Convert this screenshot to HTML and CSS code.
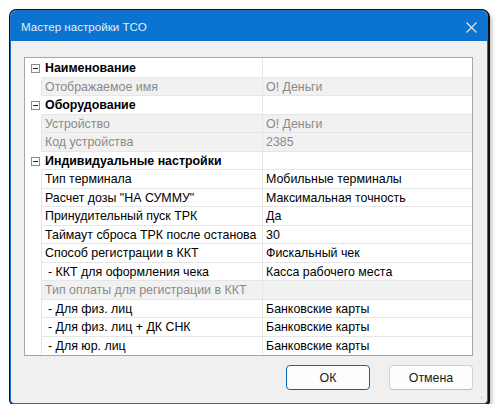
FILE: index.html
```html
<!DOCTYPE html>
<html lang="ru">
<head>
    <meta charset="UTF-8">
    <title>Мастер настройки ТСО</title>
    <link rel="stylesheet" href="styles.css">
</head>
<body>
    <div class="window">
        <div class="titlebar">
            <span class="title">Мастер настройки ТСО</span>
            <svg class="close" width="11" height="11" viewBox="0 0 11 11">
                <path d="M0.5 0.5 L10.5 10.5 M10.5 0.5 L0.5 10.5" stroke="#dce9f7" stroke-width="1.1" fill="none"/>
            </svg>
        </div>
        <div class="body">
            <div class="grid">
                <div class="row group">
                    <div class="gutter"><span class="toggle"></span></div>
                    <div class="name">Наименование</div>
                    <div class="value"></div>
                </div>
                <div class="row readonly">
                    <div class="gutter"></div>
                    <div class="name">Отображаемое имя</div>
                    <div class="value">О! Деньги</div>
                </div>
                <div class="row group">
                    <div class="gutter"><span class="toggle"></span></div>
                    <div class="name">Оборудование</div>
                    <div class="value"></div>
                </div>
                <div class="row readonly">
                    <div class="gutter"></div>
                    <div class="name">Устройство</div>
                    <div class="value">О! Деньги</div>
                </div>
                <div class="row readonly">
                    <div class="gutter"></div>
                    <div class="name">Код устройства</div>
                    <div class="value">2385</div>
                </div>
                <div class="row group">
                    <div class="gutter"><span class="toggle"></span></div>
                    <div class="name">Индивидуальные настройки</div>
                    <div class="value"></div>
                </div>
                <div class="row">
                    <div class="gutter"></div>
                    <div class="name">Тип терминала</div>
                    <div class="value">Мобильные терминалы</div>
                </div>
                <div class="row">
                    <div class="gutter"></div>
                    <div class="name">Расчет дозы "НА СУММУ"</div>
                    <div class="value">Максимальная точность</div>
                </div>
                <div class="row">
                    <div class="gutter"></div>
                    <div class="name">Принудительный пуск ТРК</div>
                    <div class="value">Да</div>
                </div>
                <div class="row">
                    <div class="gutter"></div>
                    <div class="name">Таймаут сброса ТРК после останова</div>
                    <div class="value">30</div>
                </div>
                <div class="row">
                    <div class="gutter"></div>
                    <div class="name">Способ регистрации в ККТ</div>
                    <div class="value">Фискальный чек</div>
                </div>
                <div class="row">
                    <div class="gutter"></div>
                    <div class="name sub">- ККТ для оформления чека</div>
                    <div class="value">Касса рабочего места</div>
                </div>
                <div class="row readonly">
                    <div class="gutter"></div>
                    <div class="name">Тип оплаты для регистрации в ККТ</div>
                    <div class="value"></div>
                </div>
                <div class="row">
                    <div class="gutter"></div>
                    <div class="name sub">- Для физ. лиц</div>
                    <div class="value">Банковские карты</div>
                </div>
                <div class="row">
                    <div class="gutter"></div>
                    <div class="name sub">- Для физ. лиц + ДК СНК</div>
                    <div class="value">Банковские карты</div>
                </div>
                <div class="row last">
                    <div class="gutter"></div>
                    <div class="name sub">- Для юр. лиц</div>
                    <div class="value">Банковские карты</div>
                </div>
            </div>
            <div class="buttons">
                <button class="btn default">ОК</button>
                <button class="btn">Отмена</button>
            </div>
            <div class="grip"></div>
        </div>
    </div>
</body>
</html>
```
FILE: styles.css
```css
body { margin: 0; background: #fff; font-family: "Liberation Sans", Arial, sans-serif; font-size: 12.4px; }

.window {
    margin: 10px 0 0 10px;
    width: 478px;
    height: 394px;
    box-sizing: border-box;
    border: 1px solid #1f6fc0;
    border-radius: 6px 6px 4px 4px;
    background: #f0f0f0;
    box-shadow: 0 0 0 1px #111, 1px 1px 0 1px #111, 3px 4px 5px rgba(0,0,0,0.35);
    display: flex;
    flex-direction: column;
    overflow: hidden;
}

.titlebar {
    height: 30px;
    background: #0a74d0;
    display: flex;
    align-items: center;
    justify-content: space-between;
    padding: 0 10px 0 10px;
    flex-shrink: 0;
}
.title { color: #e3eefa; font-size: 11.6px; padding-top: 1px; }
.close { margin-top: 2px; }

.body {
    flex: 1;
    padding: 16px 13px 0 13px;
    position: relative;
}

.grid {
    width: 449px;
    box-sizing: border-box;
    border: 1px solid #a6a6a6;
    background: #fff;
    padding-top: 1px;
}

.row {
    display: flex;
    height: 18.5px;
    line-height: 18px;
    color: #000;
}
.gutter { width: 16px; flex-shrink: 0; background: #fff; display: flex; align-items: center; padding-left: 6px; box-sizing: border-box; }
.name {
    width: 221px;
    flex-shrink: 0;
    box-sizing: border-box;
    padding-left: 3px;
    border-left: 1px solid #e6e6e6;
    border-bottom: 1px solid #e6e6e6;
    white-space: nowrap;
    overflow: hidden;
}
.value {
    flex: 1;
    padding-left: 3px;
    border-left: 1px solid #e6e6e6;
    border-bottom: 1px solid #e6e6e6;
    white-space: nowrap;
}
.name.sub { padding-left: 6px; }
.row.last .name, .row.last .value { border-bottom: none; }

.row.group .name { font-weight: bold; border-left-color: #fff; }
.row.readonly .name, .row.readonly .value { background: #f1f1f1; color: #8a8a8a; }

.toggle {
    width: 9px;
    height: 9px;
    box-sizing: border-box;
    border: 1px solid #8c8c8c;
    position: relative;
    margin-top: 1px;
}
.toggle::after {
    content: "";
    position: absolute;
    left: 1px;
    top: 3px;
    width: 5px;
    height: 1px;
    background: #222;
}

.buttons {
    display: flex;
    justify-content: flex-end;
    gap: 19px;
    width: 449px;
    margin-top: 9px;
}
.btn {
    width: 84px;
    height: 25px;
    font-family: inherit;
    font-size: 12.4px;
    color: #1a1a1a;
    background: #fdfdfd;
    border: 1px solid #d2d2d2;
    border-bottom-color: #bdbdbd;
    border-radius: 4px;
}
.btn.default { border: 1px solid #0067c0; }

.grip {
    position: absolute;
    right: 3px;
    bottom: 3px;
    width: 7px;
    height: 7px;
    background: radial-gradient(circle, #a8a8a8 0.7px, transparent 1px) 0 0 / 3px 3px;
    clip-path: polygon(100% 0, 100% 100%, 0 100%);
}
```
